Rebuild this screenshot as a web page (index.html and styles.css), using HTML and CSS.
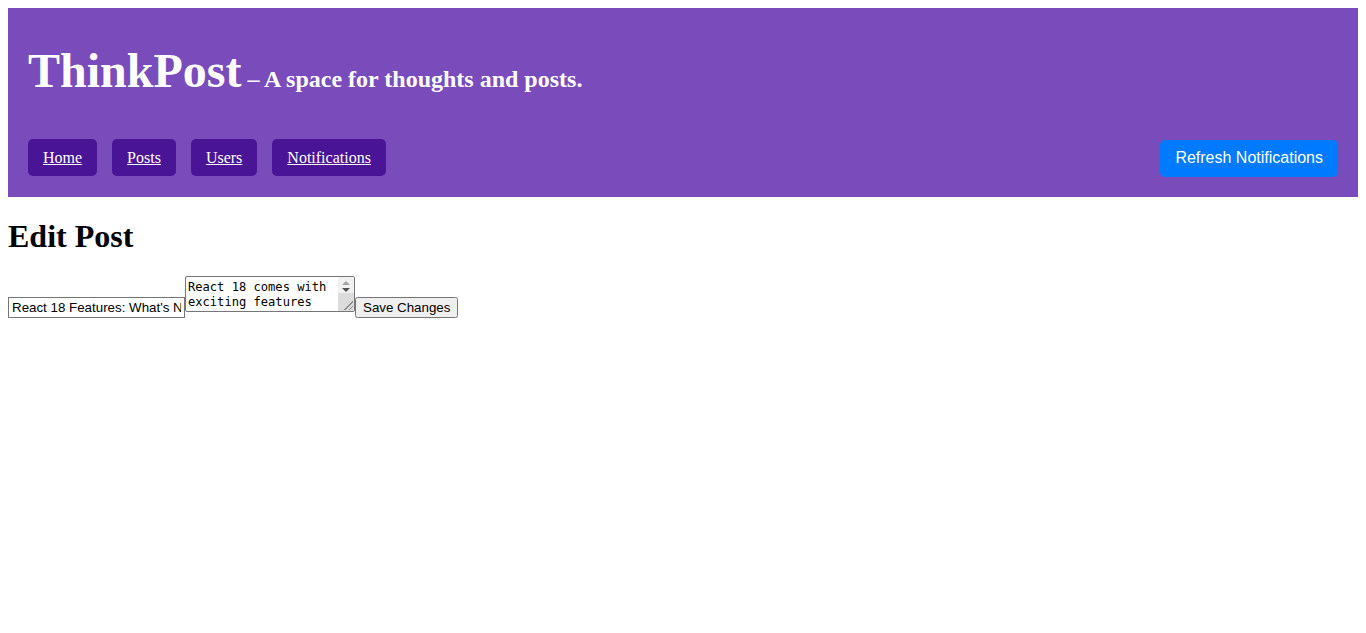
FILE: index.html
```html
<!DOCTYPE html>
<html lang="en">
<head>
<meta charset="utf-8">
<title>ThinkPost</title>
<link rel="stylesheet" href="styles.css">
</head>
<body>
<header class="site-header">
  <h1 class="brand">ThinkPost<span class="tagline"> – A space for thoughts and posts.</span></h1>
  <div class="navbar">
    <nav class="nav-links">
      <a href="#" class="nav-link">Home</a>
      <a href="#" class="nav-link">Posts</a>
      <a href="#" class="nav-link">Users</a>
      <a href="#" class="nav-link">Notifications</a>
    </nav>
    <button class="refresh-btn" type="button">Refresh Notifications</button>
  </div>
</header>
<main>
  <h1 class="page-title">Edit Post</h1>
  <form class="edit-form"><input class="title-input" type="text" value="React 18 Features: What's New"><span class="textarea-wrap"><textarea class="content-input">React 18 comes with exciting features</textarea><span class="fake-scrollbar" aria-hidden="true"><span class="arrow-up"></span><span class="arrow-down"></span><span class="scroll-thumb"><span class="resizer"></span></span></span></span><button class="save-btn" type="submit">Save Changes</button></form>
</main>
</body>
</html>
```

FILE: styles.css
```css
body {
  margin: 8px;
  font-family: "Liberation Serif", "Times New Roman", serif;
}

.site-header {
  background: #794bbb;
  padding: 20px;
  color: #ffffff;
}

.brand {
  font-size: 48px;
  margin: 15px 0 40px;
  font-weight: bold;
}

.tagline {
  font-size: 24px;
}

.navbar {
  display: flex;
  justify-content: space-between;
  align-items: center;
}

.nav-links {
  display: flex;
  gap: 15px;
}

.nav-link {
  display: inline-block;
  background: #4a1497;
  color: #ffffff;
  padding: 10px 15px;
  border-radius: 5px;
  font-size: 16px;
  line-height: 17px;
}

.refresh-btn {
  background: #007bff;
  color: #ffffff;
  border: none;
  border-radius: 5px;
  padding: 9px 15px 11px;
  margin-top: 2px;
  font-family: "Liberation Sans", Arial, sans-serif;
  font-size: 16px;
  line-height: 17px;
  cursor: pointer;
}

.page-title {
  font-size: 32px;
  margin: 21.44px 0 20.44px;
}

.edit-form {
  margin: 0;
}

.title-input {
  box-sizing: border-box;
  width: 177px;
  height: 21px;
  margin: 0;
  font-family: "Liberation Sans", Arial, sans-serif;
  font-size: 13.33px;
  border: 1px solid #767676;
  padding: 1px 3px;
}

.textarea-wrap {
  position: relative;
  display: inline-block;
}

.content-input {
  box-sizing: border-box;
  display: block;
  width: 170px;
  height: 36px;
  margin: 0;
  padding: 3px 18px 1px 2px;
  border: 1px solid #767676;
  border-radius: 2px;
  font-family: "DejaVu Sans Mono", "Liberation Mono", monospace;
  font-size: 12.1px;
  line-height: 15px;
  overflow: hidden;
  resize: none;
}

.fake-scrollbar {
  position: absolute;
  top: 1px;
  right: 1px;
  bottom: 1px;
  width: 16px;
  background: #f1f1f1;
  display: flex;
  flex-direction: column;
  align-items: center;
}

.arrow-up {
  margin-top: 4px;
  width: 0;
  height: 0;
  border-left: 4px solid transparent;
  border-right: 4px solid transparent;
  border-bottom: 4px solid #a3a3a3;
}

.arrow-down {
  margin-top: 3px;
  width: 0;
  height: 0;
  border-left: 4px solid transparent;
  border-right: 4px solid transparent;
  border-top: 4px solid #505050;
}

.scroll-thumb {
  position: relative;
  margin-top: auto;
  align-self: stretch;
  height: 18px;
  background: #dcdcdc;
}

.resizer {
  position: absolute;
  right: 1px;
  bottom: 1px;
  width: 9px;
  height: 9px;
  background:
    linear-gradient(135deg, transparent 48%, #8a8a8a 48%, #8a8a8a 56%, transparent 56%, transparent 74%, #8a8a8a 74%, #8a8a8a 82%, transparent 82%);
}

.save-btn {
  font-family: "Liberation Sans", Arial, sans-serif;
  font-size: 13.33px;
  margin: 0;
}
```
